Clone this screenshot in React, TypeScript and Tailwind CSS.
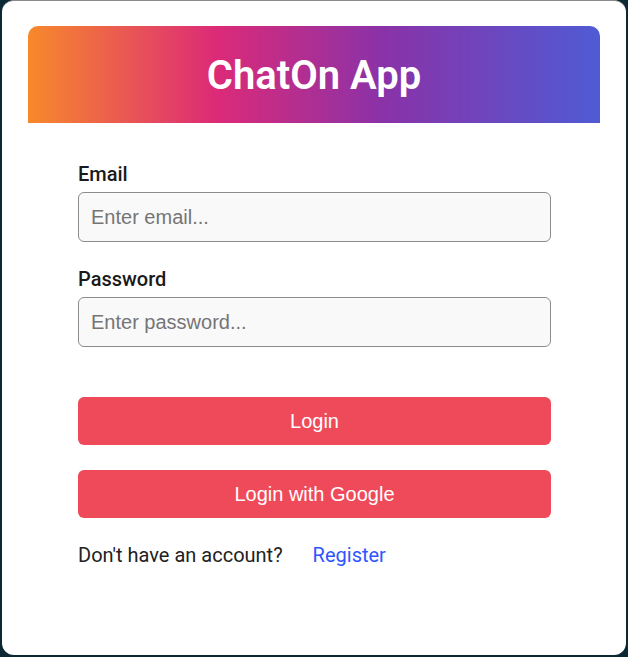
export default function App() {
  return (
    <div className="h-[657px] w-[628px] bg-[#0c2833] pl-[2px] pr-[2px] pb-[2px]">
      <div className="h-[655px] w-[624px] rounded-[12px] border-t border-[#8a8a8a] bg-white px-[26px] pt-[25px]">
        <div className="flex h-[97px] items-center justify-center rounded-t-[10px] bg-[linear-gradient(to_right,#f7892b_0%,#dc2a78_33%,#8a32a8_62%,#4f5bd4_100%)]">
          <h1 className="pt-[2px] font-['Roboto',sans-serif] text-[40px] font-semibold leading-none text-white">ChatOn App</h1>
        </div>
        <form className="mx-[50px] mt-[40px] flex w-[473px] flex-col font-['Roboto',sans-serif]">
          <label className="text-[20px] font-medium leading-[22px] text-[#1a1a1a]">Email</label>
          <input
            type="email"
            placeholder="Enter email..."
            className="mt-[7px] h-[50px] w-full rounded-[6px] border border-[#8c8c8c] bg-[#f9f9f9] px-[12px] font-['Liberation_Sans',Arial,sans-serif] text-[20px] text-[#222] placeholder:text-[#757575] outline-none"
          />
          <label className="mt-[26px] text-[20px] font-medium leading-[22px] text-[#1a1a1a]">Password</label>
          <input
            type="password"
            placeholder="Enter password..."
            className="mt-[7px] h-[50px] w-full rounded-[6px] border border-[#8c8c8c] bg-[#f9f9f9] px-[12px] font-['Liberation_Sans',Arial,sans-serif] text-[20px] text-[#222] placeholder:text-[#757575] outline-none"
          />
          <button
            type="button"
            className="mt-[50px] h-[48px] w-full rounded-[6px] bg-[#ef4a5a] font-['Liberation_Sans',Arial,sans-serif] text-[20px] text-white"
          >
            Login
          </button>
          <button
            type="button"
            className="mt-[25px] h-[48px] w-full rounded-[6px] bg-[#ef4a5a] font-['Liberation_Sans',Arial,sans-serif] text-[20px] text-white"
          >
            Login with Google
          </button>
          <div className="mt-[26px] flex items-center text-[20px] leading-[22px]">
            <span className="text-[#222]">Don't have an account?</span>
            <a className="ml-[30px] text-[#2f55ff]">Register</a>
          </div>
        </form>
      </div>
    </div>
  );
}
